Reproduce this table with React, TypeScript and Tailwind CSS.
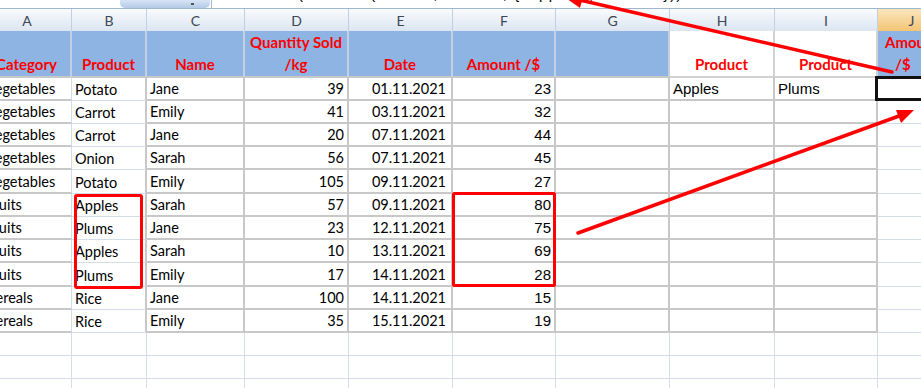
const GRID = "grid grid-cols-[89px_75px_98px_104px_104px_103px_114px_105px_103px_68px]";

const letters = ["A", "B", "C", "D", "E", "F", "G", "H", "I", "J"];

const rows: [string, string, string, number, string, number][] = [
  ["Vegetables", "Potato", "Jane", 39, "01.11.2021", 23],
  ["Vegetables", "Carrot", "Emily", 41, "03.11.2021", 32],
  ["Vegetables", "Carrot", "Jane", 20, "07.11.2021", 44],
  ["Vegetables", "Onion", "Sarah", 56, "07.11.2021", 45],
  ["Vegetables", "Potato", "Emily", 105, "09.11.2021", 27],
  ["Fruits", "Apples", "Sarah", 57, "09.11.2021", 80],
  ["Fruits", "Plums", "Jane", 23, "12.11.2021", 75],
  ["Fruits", "Apples", "Sarah", 10, "13.11.2021", 69],
  ["Fruits", "Plums", "Emily", 17, "14.11.2021", 28],
  ["Cereals", "Rice", "Jane", 100, "14.11.2021", 15],
  ["Cereals", "Rice", "Emily", 35, "15.11.2021", 19],
];

const tall = [0, 4, 8];

function FormulaBar() {
  return (
    <div className="flex h-[9px] overflow-hidden border-b border-[#9eb6ce] bg-white">
      <div className="w-[120px] shrink-0" />
      <div className="relative w-[90px] shrink-0 rounded-b-[5px] bg-linear-to-b from-[#d7e4f4] to-[#b3cae8]">
        <div className="absolute bottom-[3px] left-[71px] h-[2px] w-[3px] bg-[#555]" />
      </div>
      <div className="relative ml-[1px] flex-1 overflow-hidden border-l border-[#a5b8d0]">
        <div className="absolute -top-[15px] left-[38px] whitespace-nowrap font-['Liberation_Sans'] text-[15px] leading-[18px] tracking-[1.5px] text-black">
          =SUM(SUMIFS(F2:F12, B2:B12, {"{"}"Apples", "Plums"{"}"}))
        </div>
      </div>
    </div>
  );
}

function LetterRow() {
  return (
    <div className={GRID + " h-[22px]"}>
      {letters.map((l) => (
        <div
          key={l}
          className={
            l === "J"
              ? "flex items-center justify-center border-r border-[#e2b35e] bg-linear-to-b from-[#fbe6bd] to-[#f3c574] font-['Lato'] text-[14px] text-[#3b4757]"
              : "flex items-center justify-center border-r border-[#c3d0e2] bg-linear-to-b from-[#f9fbfd] to-[#dce5f1] font-['Lato'] text-[14px] text-[#3b4757]"
          }
        >
          {l}
        </div>
      ))}
    </div>
  );
}

function HeadCell({ blue, children }: { blue: boolean; children?: React.ReactNode }) {
  return (
    <div
      className={
        blue
          ? "flex flex-col items-center justify-end border-r-2 border-b-2 border-r-[#c4d0e2] border-b-[#c8c8c8] bg-[#8db4e2] pb-[1px] font-['Lato'] text-[15px] leading-[22px] font-bold whitespace-nowrap text-[#ff0000]"
          : "flex flex-col items-center justify-end border-r-2 border-b-2 border-[#d2d2d2] bg-white pb-[1px] font-['Lato'] text-[15px] leading-[22px] font-bold whitespace-nowrap text-[#ff0000]"
      }
    >
      {children}
    </div>
  );
}

function HeaderRow() {
  return (
    <div className={GRID + " h-[46px]"}>
      <HeadCell blue>Category</HeadCell>
      <HeadCell blue>Product</HeadCell>
      <HeadCell blue>Name</HeadCell>
      <HeadCell blue>
        <span>Quantity Sold</span>
        <span>/kg</span>
      </HeadCell>
      <HeadCell blue>Date</HeadCell>
      <HeadCell blue>Amount /$</HeadCell>
      <HeadCell blue />
      <HeadCell blue={false}>Product</HeadCell>
      <HeadCell blue={false}>Product</HeadCell>
      <div className="flex flex-col justify-end bg-[#8db4e2] pb-[3px] pl-[7px] font-['Lato'] text-[15px] leading-[22px] font-bold whitespace-nowrap text-[#ff0000]">
        <span>Amount</span>
        <span className="pl-[10px]">/$</span>
      </div>
    </div>
  );
}

const calibri = "flex items-end px-[3px] pb-[1px] font-['Lato'] text-[14.5px] leading-[18px] whitespace-nowrap text-black";
const arial = "flex items-end px-[3px] pb-[1px] font-['Liberation_Sans'] text-[15px] leading-[18px] whitespace-nowrap text-black";
const box = " border-r-2 border-b-2 border-[#c8c8c8]";

function DataRow({ r, i }: { r: [string, string, string, number, string, number]; i: number }) {
  return (
    <div className={GRID + (tall.includes(i) ? " h-[24px]" : " h-[23px]")}>
      <div className={calibri + " border-r border-b-2 border-r-[#d6ddea] border-b-[#c8c8c8]"}>{r[0]}</div>
      <div className={calibri + " border-r-2 border-b border-r-[#c8c8c8] border-b-[#d6ddea]"}>{r[1]}</div>
      <div className={calibri + box}>{r[2]}</div>
      <div className={calibri + box + " justify-end"}>{r[3]}</div>
      <div className={calibri + box + " justify-end pr-[5px]"}>{r[4]}</div>
      <div className={arial + box + " justify-end"}>{r[5]}</div>
      <div className={box} />
      <div className={arial + box}>{i === 0 ? "Apples" : ""}</div>
      <div className={arial + box}>{i === 0 ? "Plums" : ""}</div>
      <div className="relative border-b border-[#d6ddea]">
        {i === 0 && <div className="absolute -top-[1px] -left-[3px] -right-[4px] -bottom-[1px] border-[3px] border-[#111]" />}
      </div>
    </div>
  );
}

function EmptyRow() {
  return (
    <div className={GRID + " h-[23px]"}>
      {letters.map((l) => (
        <div key={l} className="border-r border-b border-[#d6ddea]" />
      ))}
    </div>
  );
}

function Marks() {
  return (
    <svg className="pointer-events-none absolute inset-0" width="921" height="388" viewBox="0 0 921 388">
      <g stroke="#ff0000" fill="none" strokeWidth="3">
        <rect x="75.5" y="195.5" width="66" height="92" rx="1.5" />
        <rect x="453.5" y="193.5" width="101" height="92" rx="1" />
        <line x1="892" y1="72" x2="582" y2="0.5" strokeWidth="3.5" strokeLinecap="round" />
        <line x1="578" y1="233" x2="899" y2="116" strokeWidth="3.5" strokeLinecap="round" />
      </g>
      <polygon points="563,-4 584,-6 580,8" fill="#ff0000" />
      <polygon points="914,110 896,110 901,123" fill="#ff0000" />
    </svg>
  );
}

export default function App() {
  return (
    <div className="relative h-[388px] w-[921px] overflow-hidden bg-white">
      <FormulaBar />
      <div className="-ml-[17px]">
        <LetterRow />
        <HeaderRow />
        {rows.map((r, i) => (
          <DataRow key={i} r={r} i={i} />
        ))}
        <EmptyRow />
        <EmptyRow />
        <EmptyRow />
      </div>
      <Marks />
    </div>
  );
}
